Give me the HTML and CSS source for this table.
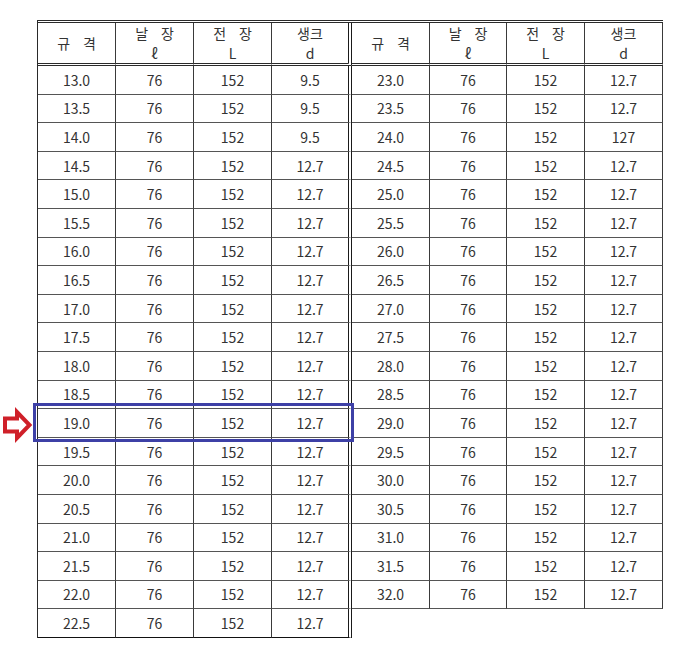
FILE: index.html
```html
<!DOCTYPE html>
<html lang="ko">
<head>
<meta charset="utf-8">
<title>규격표</title>
<link rel="stylesheet" href="styles.css">
</head>
<body>
<div class="page">
  <table class="spec spec-left">
    <thead>
      <tr>
        <th class="w78">규 격</th>
        <th class="w78">날 장<br>ℓ</th>
        <th class="w78">전 장<br>L</th>
        <th class="w80 last">생크<br>d</th>
      </tr>
    </thead>
    <tbody>
      <tr><td>13.0</td><td>76</td><td>152</td><td class="last">9.5</td></tr>
      <tr><td>13.5</td><td>76</td><td>152</td><td class="last">9.5</td></tr>
      <tr><td>14.0</td><td>76</td><td>152</td><td class="last">9.5</td></tr>
      <tr><td>14.5</td><td>76</td><td>152</td><td class="last">12.7</td></tr>
      <tr><td>15.0</td><td>76</td><td>152</td><td class="last">12.7</td></tr>
      <tr><td>15.5</td><td>76</td><td>152</td><td class="last">12.7</td></tr>
      <tr><td>16.0</td><td>76</td><td>152</td><td class="last">12.7</td></tr>
      <tr><td>16.5</td><td>76</td><td>152</td><td class="last">12.7</td></tr>
      <tr><td>17.0</td><td>76</td><td>152</td><td class="last">12.7</td></tr>
      <tr><td>17.5</td><td>76</td><td>152</td><td class="last">12.7</td></tr>
      <tr><td>18.0</td><td>76</td><td>152</td><td class="last">12.7</td></tr>
      <tr><td>18.5</td><td>76</td><td>152</td><td class="last">12.7</td></tr>
      <tr><td>19.0</td><td>76</td><td>152</td><td class="last">12.7</td></tr>
      <tr><td>19.5</td><td>76</td><td>152</td><td class="last">12.7</td></tr>
      <tr><td>20.0</td><td>76</td><td>152</td><td class="last">12.7</td></tr>
      <tr><td>20.5</td><td>76</td><td>152</td><td class="last">12.7</td></tr>
      <tr><td>21.0</td><td>76</td><td>152</td><td class="last">12.7</td></tr>
      <tr><td>21.5</td><td>76</td><td>152</td><td class="last">12.7</td></tr>
      <tr><td>22.0</td><td>76</td><td>152</td><td class="last">12.7</td></tr>
      <tr><td>22.5</td><td>76</td><td>152</td><td class="last">12.7</td></tr>
    </tbody>
  </table>
  <table class="spec spec-right">
    <thead>
      <tr>
        <th class="w78">규 격</th>
        <th class="w77">날 장<br>ℓ</th>
        <th class="w78">전 장<br>L</th>
        <th class="w78">생크<br>d</th>
      </tr>
    </thead>
    <tbody>
      <tr><td>23.0</td><td>76</td><td>152</td><td>12.7</td></tr>
      <tr><td>23.5</td><td>76</td><td>152</td><td>12.7</td></tr>
      <tr><td>24.0</td><td>76</td><td>152</td><td>127</td></tr>
      <tr><td>24.5</td><td>76</td><td>152</td><td>12.7</td></tr>
      <tr><td>25.0</td><td>76</td><td>152</td><td>12.7</td></tr>
      <tr><td>25.5</td><td>76</td><td>152</td><td>12.7</td></tr>
      <tr><td>26.0</td><td>76</td><td>152</td><td>12.7</td></tr>
      <tr><td>26.5</td><td>76</td><td>152</td><td>12.7</td></tr>
      <tr><td>27.0</td><td>76</td><td>152</td><td>12.7</td></tr>
      <tr><td>27.5</td><td>76</td><td>152</td><td>12.7</td></tr>
      <tr><td>28.0</td><td>76</td><td>152</td><td>12.7</td></tr>
      <tr><td>28.5</td><td>76</td><td>152</td><td>12.7</td></tr>
      <tr><td>29.0</td><td>76</td><td>152</td><td>12.7</td></tr>
      <tr><td>29.5</td><td>76</td><td>152</td><td>12.7</td></tr>
      <tr><td>30.0</td><td>76</td><td>152</td><td>12.7</td></tr>
      <tr><td>30.5</td><td>76</td><td>152</td><td>12.7</td></tr>
      <tr><td>31.0</td><td>76</td><td>152</td><td>12.7</td></tr>
      <tr><td>31.5</td><td>76</td><td>152</td><td>12.7</td></tr>
      <tr><td>32.0</td><td>76</td><td>152</td><td>12.7</td></tr>
    </tbody>
  </table>
  <div class="highlight"></div>
  <svg class="pointer" width="34" height="40" viewBox="0 0 34 40" aria-hidden="true">
    <polygon points="5,13.5 17,13.5 17,7 29.5,20 17,33 17,26.5 5,26.5" fill="#ffffff" stroke="#cf2029" stroke-width="4" stroke-linejoin="miter"/>
  </svg>
</div>
</body>
</html>
```
FILE: styles.css
```css
html, body {
  margin: 0;
  padding: 0;
  background: #ffffff;
}

.page {
  position: relative;
  display: flex;
  align-items: flex-start;
  padding: 20px 0 0 37px;
  font-family: "Noto Sans CJK KR", "Noto Sans", sans-serif;
  font-size: 14px;
  color: #333333;
}

.spec {
  border-collapse: separate;
  border-spacing: 0;
  table-layout: fixed;
  border-top: 3px double #2a2a2a;
}

.spec-left {
  width: 315px;
  border-left: 1px solid #2a2a2a;
}

.spec-right {
  width: 311px;
}

.spec th,
.spec td {
  box-sizing: border-box;
  padding: 0;
  text-align: center;
  vertical-align: middle;
  border-right: 1px solid #3a3a3a;
  border-bottom: 1px solid #555555;
  font-weight: normal;
}

.spec th {
  height: 42px;
  line-height: 20px;
  word-spacing: 9px;
  border-bottom: 3px double #2a2a2a;
}

.spec td {
  height: 28.6px;
  line-height: 18px;
}

.spec-left tbody tr:last-child td {
  border-bottom-color: #111111;
}

.spec .last {
  border-right: 4px double #1a1a1a;
}

.w77 { width: 77px; }
.w78 { width: 78px; }
.w80 { width: 80px; }

.highlight {
  position: absolute;
  left: 33px;
  top: 403px;
  width: 321px;
  height: 39px;
  box-sizing: border-box;
  border: 3px solid #3d40a6;
}

.pointer {
  position: absolute;
  left: 0;
  top: 405px;
}
```
